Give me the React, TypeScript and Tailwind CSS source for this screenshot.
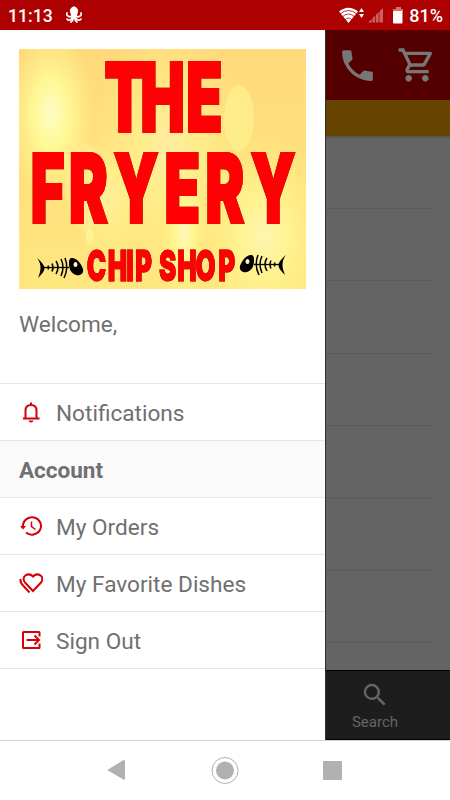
import React from "react";

const MenuIcon = ({ children }: { children: React.ReactNode }) => (
  <svg className="h-6 w-6 shrink-0 text-[#d5000a]" viewBox="0 0 24 24" fill="none" stroke="currentColor" strokeWidth="2">
    {children}
  </svg>
);

const Row = ({ icon, label }: { icon: React.ReactNode; label: string }) => (
  <div className="flex h-[57px] items-center border-b border-[#e6e6e6] pl-[19px] text-[#707070]">
    {icon}
    <span className="ml-[13px] pt-1 text-[22.6px] leading-7">{label}</span>
  </div>
);

const Fish = () => (
  <g>
    <path d="M0 0C5 4 7.500 8 7.500 10C7.500 13 5 16 1 20C3 15 3.500 12 3.500 10C3.500 7 3 4 0 0Z" />
    <path d="M7 9.500H32" stroke="#000" strokeWidth="1.3" />
    <path d="M11 7.500q1 2 0 4M15 5.500q2 4 0 8M19 3q4 6 0 13M24 1q4 8 0 17M28 0q4 10-1 20" stroke="#000" strokeWidth="1.500" fill="none" />
    <path d="M34 0C39-1 44 5 46 11C47 16 43 18 39 17C34 15 32 11 32 6C32 3 32 1 34 0Z" />
    <ellipse cx="38.500" cy="6.500" rx="2" ry="2.600" fill="#fff7c0" />
  </g>
);

const Logo = () => (
  <svg className="ml-[19px] mt-[19px] block h-[240px] w-[287px] shrink-0" viewBox="0 0 287 240" fontFamily="Inter, Roboto, sans-serif" fontWeight="900">
    <defs>
      <linearGradient id="base" x2="0" y2="1">
        <stop offset="0" stopColor="#ffd97b" />
        <stop offset=".45" stopColor="#ffe07c" />
        <stop offset="1" stopColor="#ffe780" />
      </linearGradient>
      <radialGradient id="glow">
        <stop offset="0" stopColor="#fffcc8" />
        <stop offset=".4" stopColor="#fffb98" stopOpacity=".9" />
        <stop offset="1" stopColor="#fff48c" stopOpacity="0" />
      </radialGradient>
    </defs>
    <rect width="287" height="240" fill="url(#base)" />
    <ellipse cx="32" cy="65" rx="44" ry="85" fill="url(#glow)" />
    <ellipse cx="150" cy="100" rx="80" ry="130" fill="url(#glow)" opacity=".5" />
    <ellipse cx="165" cy="185" rx="22" ry="75" fill="url(#glow)" opacity=".8" />
    <ellipse cx="245" cy="185" rx="65" ry="100" fill="url(#glow)" opacity=".7" />
    <ellipse cx="90" cy="150" rx="35" ry="70" fill="url(#glow)" opacity=".4" />
    <ellipse cx="220" cy="69" rx="15" ry="33" fill="#fff08c" opacity=".8" />
    <ellipse cx="67" cy="138" rx="20" ry="43" fill="#fff19b" opacity=".5" />
    <ellipse cx="71" cy="187" rx="4" ry="8" fill="#fff494" />
    <g className="drop-shadow-[0_0_0.6px_#604000]" fill="#ff0004" stroke="#ff0004">
      <text transform="translate(0 82.800) scale(.62 1)" fontSize="96.500" strokeWidth="2" x="137.500 195.500 269.500">THE</text>
      <text transform="translate(0 174.300) scale(.61 1)" fontSize="96.500" strokeWidth="2" x="19 81.500 154.500 238 305.500 379">FRYERY</text>
      <text transform="translate(0 232.300) scale(.61 1)" fontSize="42.500" strokeWidth=".8" x="111 145.500 176 190 220 229.500 259.500 289.500 326.500">CHIP SHOP</text>
    </g>
    <g transform="translate(18 209)"><Fish /></g>
    <g transform="translate(267 206) scale(-1 1)"><Fish /></g>
  </svg>
);

export default function App() {
  return (
    <div className="flex h-[800px] w-[450px] flex-col overflow-hidden bg-white font-['Roboto','Noto_Sans',sans-serif]">
      <header className="flex h-[30px] shrink-0 items-center bg-[#ad0000] text-[17.6px] font-medium text-white">
        <span className="ml-2 mt-[2px] w-[58px] leading-5">11:13</span>
        <svg className="h-[18px] w-4" viewBox="0 0 16 18" fill="#fff" stroke="#fff" strokeLinecap="round">
          <path d="M8 1C4.500 1 3.500 5 5 7.500L6 11H10L11 7.500C12.500 5 11.500 1 8 1Z" />
          <path d="M6 9Q5 12 2 10Q0 9 1 7M7 10Q5 15 2 14L1 13M7 10Q8 14 5 16M9 10Q8 14 11 16M9 10Q11 15 14 14L15 13M10 9Q11 12 14 10Q16 9 15 7" fill="none" strokeWidth="1.700" />
        </svg>
        <svg className="ml-auto h-5 w-[67px]" viewBox="0 0 67 20" fill="#fff">
          <path d="M0 6.500Q9.500-1 19 6.500L9.500 18Z" />
          <path d="M1 9Q9.500 2 18 9M3 12Q9.500 6 16 12M6 15Q9.500 11 13 15" fill="none" stroke="#ad0000" strokeWidth=".8" />
          <path d="M22.500 3L25 7H20ZM22.500 13L20 9H25Z" />
          <path d="M29 17.500L44 3V17.500Z" fill="#cf6060" />
          <path d="M33 3V18M36.500 3V18M40 3V18" stroke="#ad0000" strokeWidth=".8" />
          <path d="M57 2H62V4H64V7H54V4H57Z" fill="#d97070" />
          <rect x="54" y="6" width="9.500" height="12.500" rx="1" />
        </svg>
        <span className="ml-[3px] mr-[7px] mt-[2px] text-[18px] leading-5">81%</span>
      </header>
      <div className="flex h-[710px] shrink-0">
        <aside className="flex w-[325px] shrink-0 flex-col bg-white">
          <Logo />
          <div className="h-[95px] shrink-0 border-b border-[#e6e6e6] pl-[19px] pt-[22px] text-[22.6px] leading-7 text-[#707070]">Welcome,</div>
          <Row label="Notifications" icon={<MenuIcon><path d="M4 18.500H20.500M6.500 18V10.500Q6.500 5 12 5T17.500 10.500V18M12 2.500V5" /><path d="M9.500 20.500H14.500Q14 22.500 12 22.500T9.500 20.500Z" fill="currentColor" stroke="none" /></MenuIcon>} />
          <div className="flex h-[57px] shrink-0 items-center border-b border-[#e6e6e6] bg-[#fafafa] pl-[19px] pt-1 text-[22.5px] font-bold text-[#707070]">Account</div>
          <Row label="My Orders" icon={<MenuIcon><path d="M4 12A9 8.700 0 1 1 7 18.500" /><path d="M12.500 7.500V12.500L16.500 15.500" strokeWidth="1.500" /><path d="M1 12H7L4 15.500Z" fill="currentColor" stroke="none" /></MenuIcon>} />
          <Row label="My Favorite Dishes" icon={<MenuIcon><path d="M14 20L6 11.500C1.500 6 9 .5 14 5.500C19 .5 26.500 6 22 11.500Z" /><path d="M1.500 8Q1 12 5 15.500L10.500 21.500" /></MenuIcon>} />
          <Row label="Sign Out" icon={<MenuIcon><path d="M20.500 8.500V4.500Q20.500 4 20 4H4.500Q4 4 4 4.500V19.500Q4 20 4.500 20H20Q20.500 20 20.500 19.500V15.500M7.500 12H20M15.500 7.500L20 12L15.500 16.500" /></MenuIcon>} />
        </aside>
        <main className="flex min-w-0 flex-1 flex-col border-l border-[#303030] bg-[#646464]">
          <div className="flex h-[70px] shrink-0 items-center bg-[#550000] text-[#777]">
            <svg className="ml-[11px] h-[41px] w-[41px]" viewBox="0 0 24 24" fill="currentColor"><path d="M6.620 10.790c1.440 2.830 3.760 5.140 6.590 6.590l2.200-2.200c.27-.27.67-.36 1.020-.24 1.120.37 2.330.57 3.570.57.55 0 1 .45 1 1V20c0 .55-.45 1-1 1-9.390 0-17-7.610-17-17 0-.55.45-1 1-1h3.500c.55 0 1 .45 1 1 0 1.250.2 2.450.57 3.570.11.35.03.74-.25 1.020l-2.200 2.200z" /></svg>
            <svg className="ml-[19px] h-10 w-10" viewBox="0 0 24 24" fill="currentColor"><path d="M15.550 13c.75 0 1.410-.41 1.750-1.030l3.580-6.490A.996.996 0 0 0 20.010 4H5.210l-.94-2H1v2h2l3.600 7.590-1.350 2.440C4.520 15.370 5.480 17 7 17h12v-2H7l1.100-2h7.450zM6.160 6h12.150l-2.760 5H8.530L6.160 6zM7 18c-1.100 0-1.990.9-1.990 2S5.900 22 7 22s2-.9 2-2-.9-2-2-2zm10 0c-1.100 0-1.990.9-1.990 2s.89 2 1.990 2 2-.9 2-2-.9-2-2-2z" /></svg>
          </div>
          <div className="h-9 shrink-0 bg-[#664400]" />
          <div className="h-[534px] shrink-0 pr-[17px] shadow-[inset_0_3px_3px_-2px_#505050]">
            <div className="h-[73px] border-b border-[#5b5b5b]" />
            <div className="h-[72px] border-b border-[#5b5b5b]" />
            <div className="h-[73px] border-b border-[#5b5b5b]" />
            <div className="h-[72px] border-b border-[#5b5b5b]" />
            <div className="h-[73px] border-b border-[#5b5b5b]" />
            <div className="h-[72px] border-b border-[#5b5b5b]" />
            <div className="h-[72px] border-b border-[#5b5b5b]" />
          </div>
          <div className="flex h-[70px] flex-col items-center border-y border-black bg-[#1d1d1d] pr-[26px] text-[#656565]">
            <svg className="mt-[9px] h-[30px] w-[30px]" viewBox="0 0 24 24" fill="currentColor"><path d="M15.500 14h-.79l-.28-.27A6.471 6.471 0 0 0 16 9.500 6.500 6.500 0 1 0 9.500 16c1.610 0 3.090-.59 4.230-1.570l.27.28v.79l5 4.990L20.490 19l-4.990-5zm-6 0C7.010 14 5 11.990 5 9.500S7.010 5 9.500 5 14 7.010 14 9.500 11.990 14 9.500 14z" /></svg>
            <span className="mt-[2px] text-[15px] leading-5">Search</span>
          </div>
        </main>
      </div>
      <nav className="flex h-[60px] shrink-0 items-center justify-between border-t border-[#d5d5d5] pl-[107px] pr-[108px]">
        <svg className="mb-px h-5 w-[18px]" viewBox="0 0 18 20" fill="#b1b1b1"><path d="M1 9.500L16.500 0Q18 0 18 1V19Q18 20 16.500 19.500L1 10.500Q0 10 1 9.500Z" /></svg>
        <svg className="ml-px h-7 w-7" viewBox="0 0 28 28" fill="#b1b1b1"><circle cx="14" cy="13.500" r="9" /><circle cx="14" cy="13.500" r="13" fill="none" stroke="#b1b1b1" /></svg>
        <div className="mb-px h-[19px] w-[19px] rounded-[1px] bg-[#b1b1b1]" />
      </nav>
    </div>
  );
}
